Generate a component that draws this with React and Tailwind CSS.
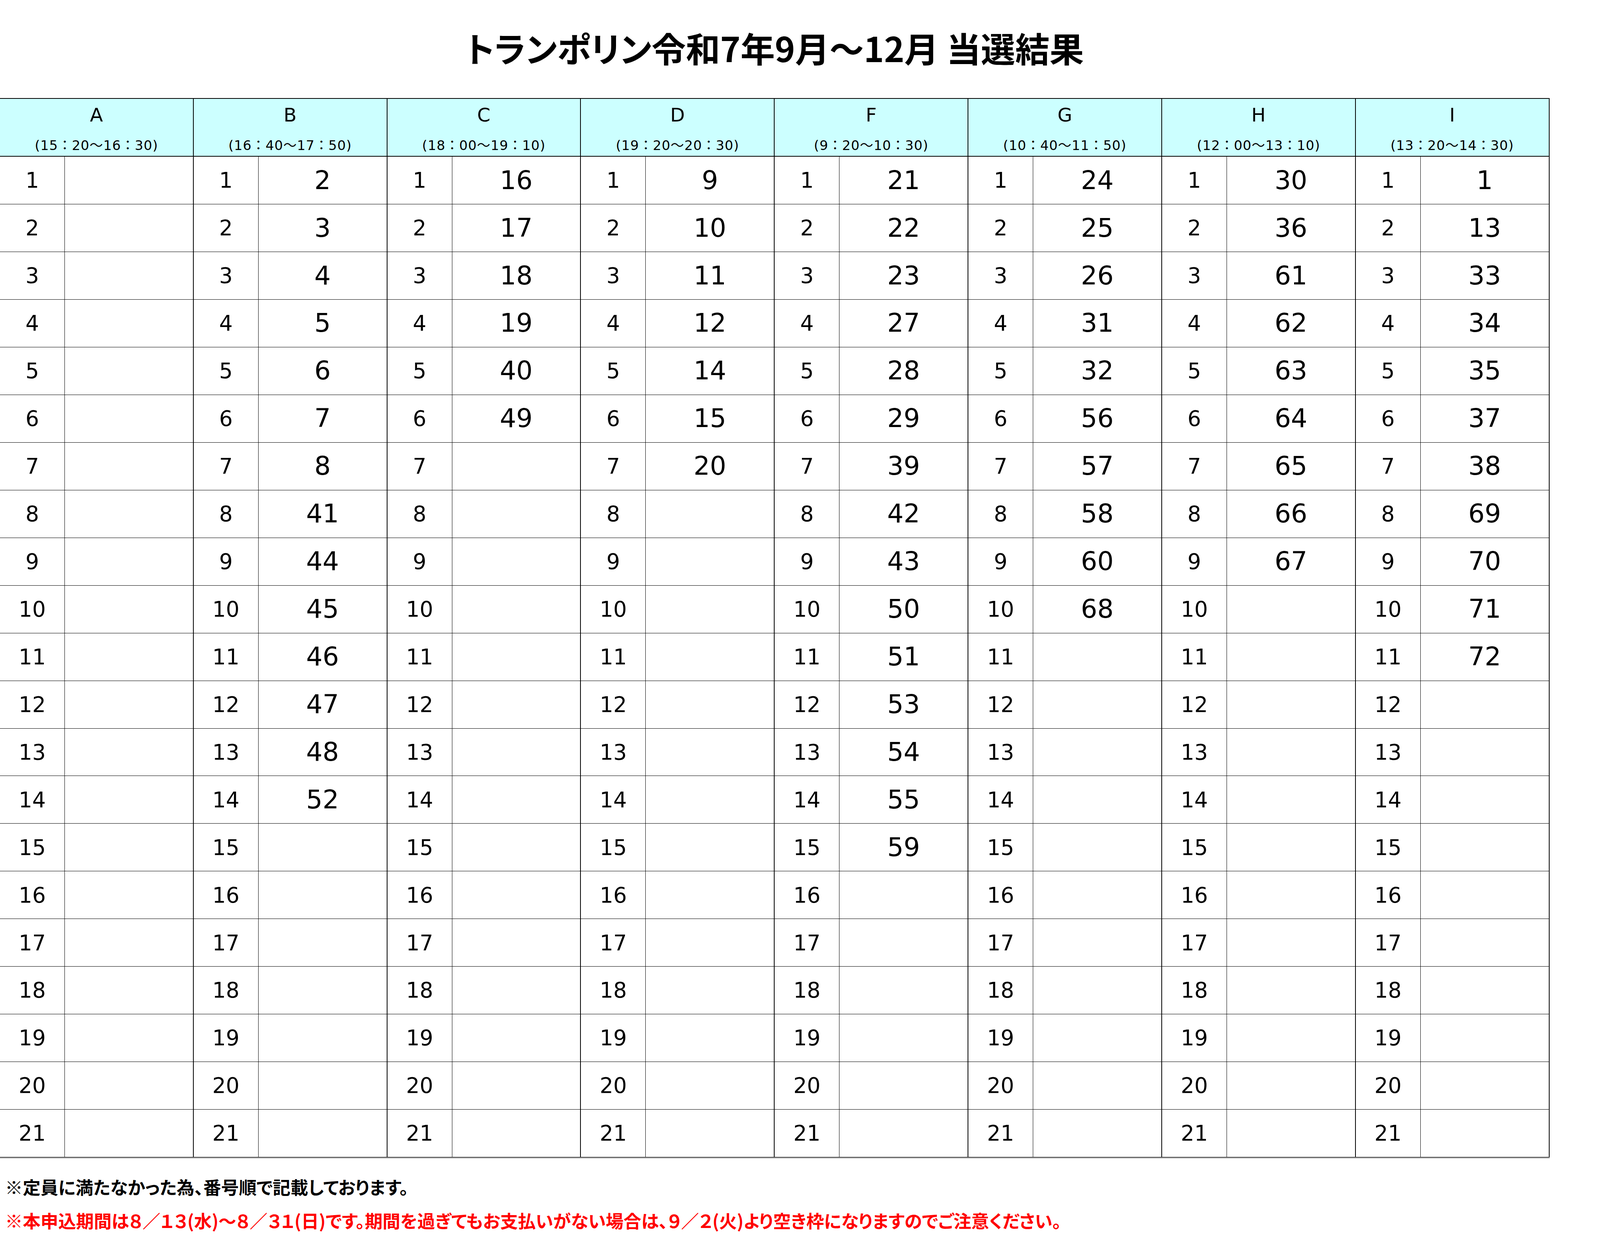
import React from "react";

const groups = [
  { key: "A", time: "(15：20～16：30)", values: [] },
  { key: "B", time: "(16：40～17：50)", values: [2, 3, 4, 5, 6, 7, 8, 41, 44, 45, 46, 47, 48, 52] },
  { key: "C", time: "(18：00～19：10)", values: [16, 17, 18, 19, 40, 49] },
  { key: "D", time: "(19：20～20：30)", values: [9, 10, 11, 12, 14, 15, 20] },
  { key: "F", time: "(9：20～10：30)", values: [21, 22, 23, 27, 28, 29, 39, 42, 43, 50, 51, 53, 54, 55, 59] },
  { key: "G", time: "(10：40～11：50)", values: [24, 25, 26, 31, 32, 56, 57, 58, 60, 68] },
  { key: "H", time: "(12：00～13：10)", values: [30, 36, 61, 62, 63, 64, 65, 66, 67] },
  { key: "I", time: "(13：20～14：30)", values: [1, 13, 33, 34, 35, 37, 38, 69, 70, 71, 72] },
];

const rows = Array.from({ length: 21 }, (_, i) => i + 1);

const tableFont = "font-['DejaVu_Sans','Noto_Sans_CJK_JP',sans-serif]";
const jpFont = "font-['Noto_Sans_CJK_JP',sans-serif] [font-feature-settings:'palt']";

function Group({ group }) {
  return (
    <div className="flex flex-col border-r-2 border-black">
      {/* header: letter + time slot */}
      <div className="flex h-[4.615vh] shrink-0 flex-col border-b-2 border-black bg-[#ccffff] text-black">
        <div className="flex h-[2.588vh] items-center justify-center text-[1.185vw] leading-none">
          {group.key}
        </div>
        <div className="flex flex-1 items-center justify-center pt-[0.25vh] text-[0.833vw] leading-none tracking-[0.03em] whitespace-nowrap">
          {group.time}
        </div>
      </div>
      {rows.map((n) => (
        <div
          key={n}
          className={
            n === 21
              ? "flex flex-1 text-black"
              : "flex flex-1 border-b border-black text-black"
          }
        >
          <div className="flex w-[4.053vw] shrink-0 items-center justify-center border-r border-black text-[1.333vw] leading-none">
            {n}
          </div>
          <div className="flex flex-1 items-center justify-center text-[1.61vw] leading-none">
            {group.values[n - 1] ?? ""}
          </div>
        </div>
      ))}
    </div>
  );
}

export default function App() {
  return (
    <div className="flex min-h-screen w-full flex-col bg-white">
      <div className="flex h-[7.83vh] w-[96.84vw] shrink-0 items-center justify-center pb-[0.31vh]">
        <h1 className={`${jpFont} text-[2.147vw] font-bold leading-none whitespace-nowrap text-black`}>
          トランポリン令和7年9月～12月 当選結果
        </h1>
      </div>

      <div
        className={`${tableFont} grid h-[84.6vh] w-[96.84vw] shrink-0 grid-cols-8 border-t-2 border-b-[3px] border-double border-black`}
      >
        {groups.map((g) => (
          <Group key={g.key} group={g} />
        ))}
      </div>

      <div className={`${jpFont} mt-[0.967vh] pl-[0.315vw] text-[1.11vw] font-bold leading-[2.68vh] whitespace-nowrap`}>
        <p className="text-black">※定員に満たなかった為、番号順で記載しております。</p>
        <p className="text-[#ff0000]">
          ※本申込期間は８／１３(水)～８／３１(日)です。期間を過ぎてもお支払いがない場合は、９／２(火)より空き枠になりますのでご注意ください。
        </p>
      </div>
    </div>
  );
}
